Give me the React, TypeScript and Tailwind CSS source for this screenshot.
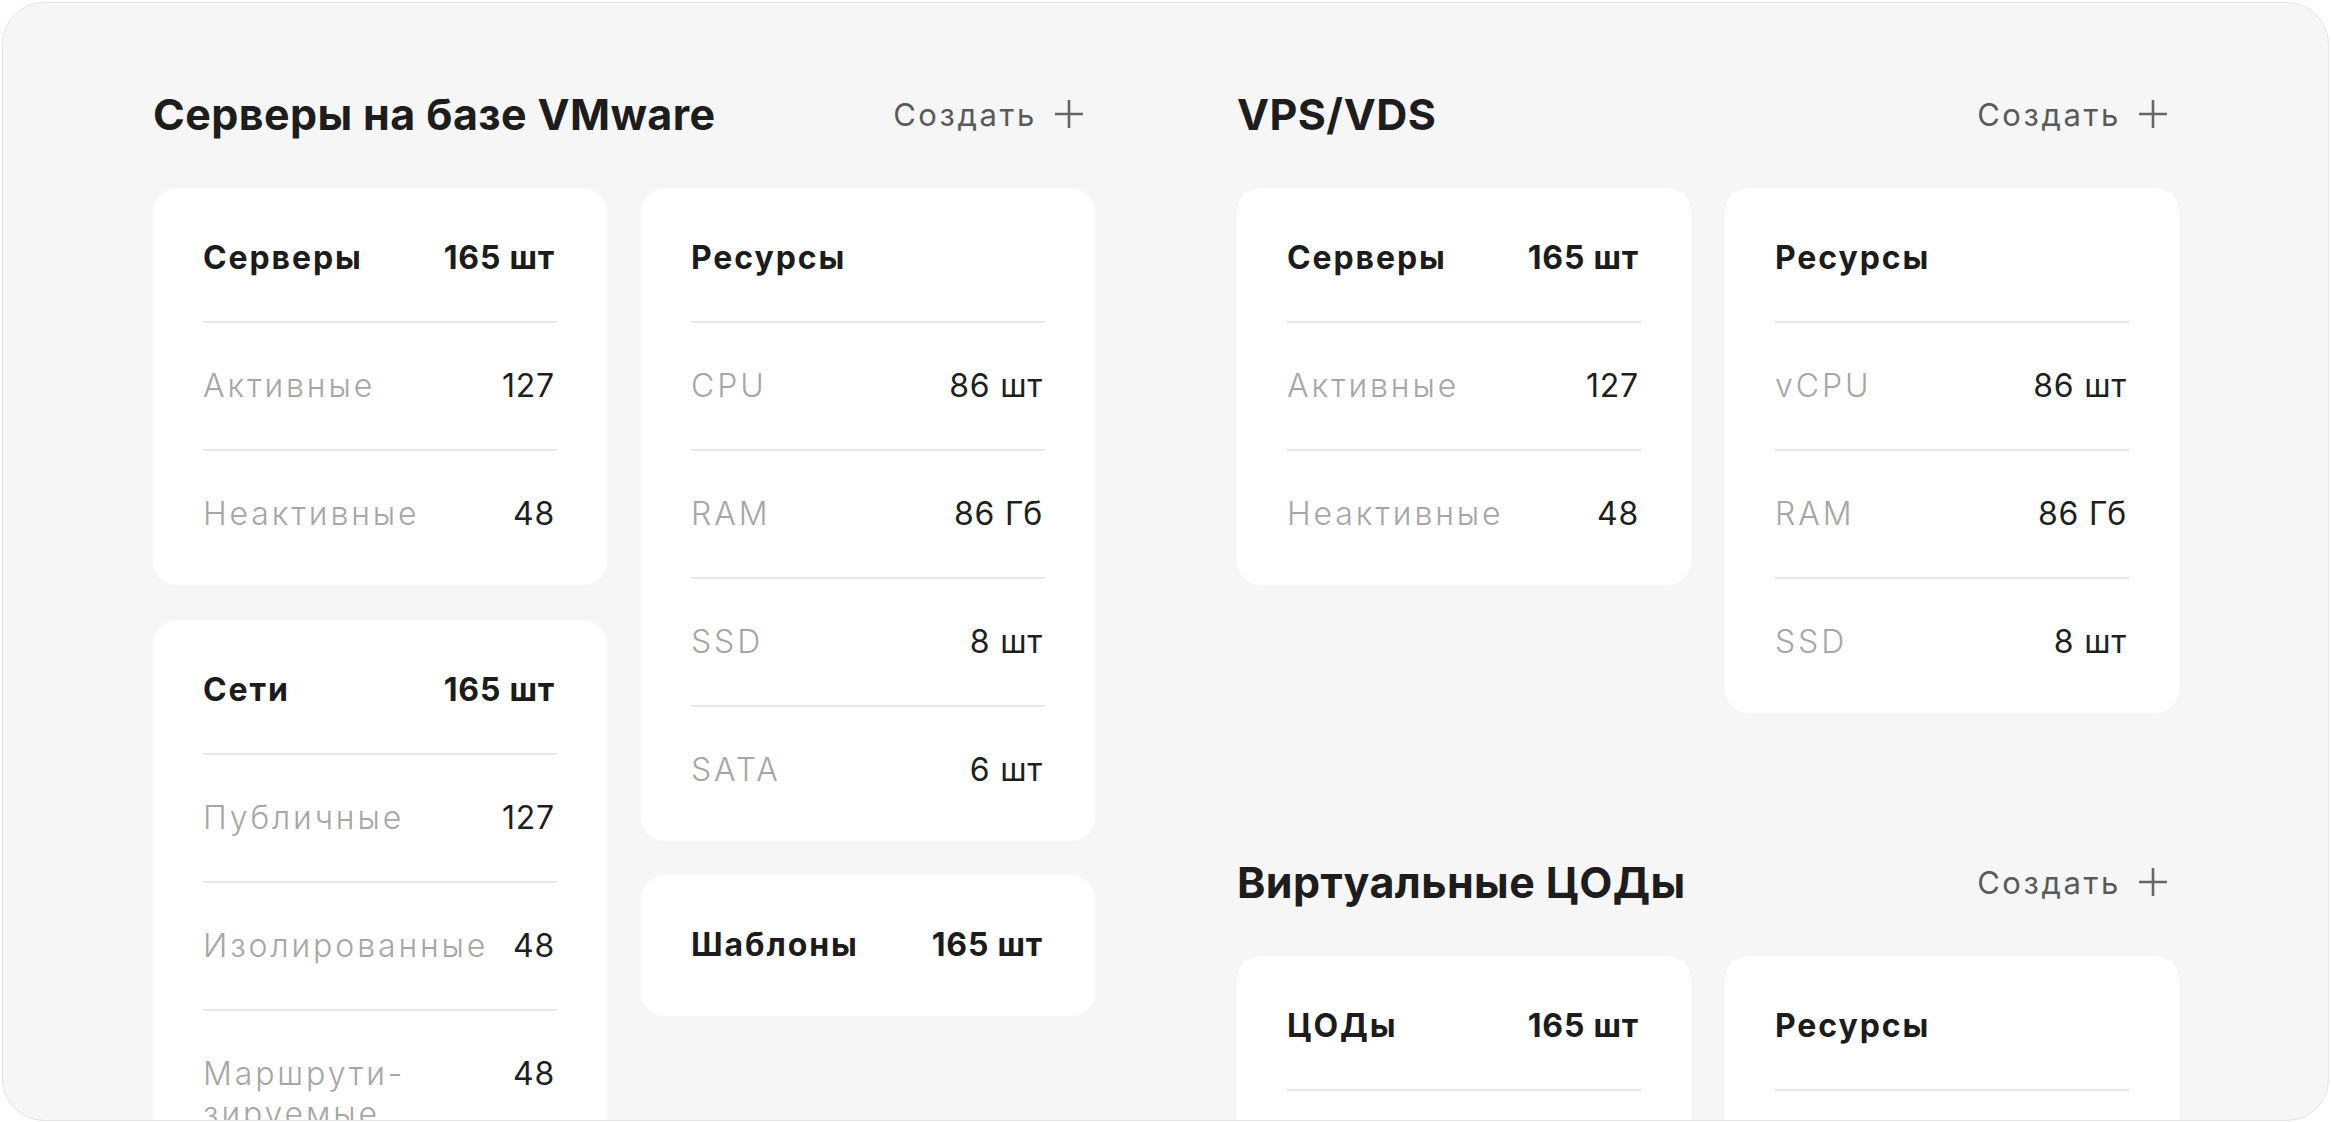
import React from "react";

type RowData = { label: React.ReactNode; value: string };
type CardData = { title: string; total?: string; rows: RowData[] };

function Plus() {
  return (
    <svg width="28" height="28" viewBox="0 0 28 28" className="shrink-0">
      <path d="M14 0V28M0 14H28" stroke="#666666" strokeWidth="2.6" fill="none" />
    </svg>
  );
}

function Row({ label, value, head }: { label: React.ReactNode; value?: string; head?: boolean }) {
  return (
    <div className="flex items-start justify-between gap-4 py-[43px] leading-[40px] text-[32px]">
      <div
        className={
          head
            ? "font-bold text-[#1c1c1c] tracking-[1.9px]"
            : "font-light text-[#a6a6a6] tracking-[2.9px]"
        }
      >
        {label}
      </div>
      {value ? (
        <div
          className={
            head
              ? "font-bold text-[#1c1c1c] whitespace-nowrap tracking-[0.8px] mr-[2px]"
              : "font-normal text-[#1f1f1f] whitespace-nowrap tracking-[0.8px] mr-[2px]"
          }
        >
          {value}
        </div>
      ) : null}
    </div>
  );
}

function Card({ data }: { data: CardData }) {
  return (
    <div className="bg-white rounded-[24px] px-[50px] pt-[7px] pb-[8px]">
      <Row label={data.title} value={data.total} head />
      {data.rows.map((r, i) => (
        <React.Fragment key={i}>
          <div className="h-[2px] bg-[#e6e6e6]" />
          <Row label={r.label} value={r.value} />
        </React.Fragment>
      ))}
    </div>
  );
}

function SectionHeader({ title }: { title: string }) {
  return (
    <div className="flex items-center justify-between h-[48px] mb-[50px] pr-[12px]">
      <h2 className="text-[43px] font-bold text-[#1d1d1d] leading-none tracking-[0.4px]">{title}</h2>
      <button className="flex items-center gap-[18px] text-[31px] text-[#5a5a5a] leading-none tracking-[2.6px]">
        <span>Создать</span>
        <Plus />
      </button>
    </div>
  );
}

const serversVm: CardData = {
  title: "Серверы",
  total: "165 шт",
  rows: [
    { label: "Активные", value: "127" },
    { label: "Неактивные", value: "48" },
  ],
};

const networks: CardData = {
  title: "Сети",
  total: "165 шт",
  rows: [
    { label: "Публичные", value: "127" },
    { label: "Изолированные", value: "48" },
    {
      label: (
        <>
          Маршрути-
          <br />
          зируемые
        </>
      ),
      value: "48",
    },
  ],
};

const resourcesVm: CardData = {
  title: "Ресурсы",
  rows: [
    { label: "CPU", value: "86 шт" },
    { label: "RAM", value: "86 Гб" },
    { label: "SSD", value: "8 шт" },
    { label: "SATA", value: "6 шт" },
  ],
};

const templates: CardData = { title: "Шаблоны", total: "165 шт", rows: [] };

const vpsServers: CardData = {
  title: "Серверы",
  total: "165 шт",
  rows: [
    { label: "Активные", value: "127" },
    { label: "Неактивные", value: "48" },
  ],
};

const vpsResources: CardData = {
  title: "Ресурсы",
  rows: [
    { label: "vCPU", value: "86 шт" },
    { label: "RAM", value: "86 Гб" },
    { label: "SSD", value: "8 шт" },
  ],
};

const vdcCard: CardData = {
  title: "ЦОДы",
  total: "165 шт",
  rows: [
    { label: "Активные", value: "127" },
    { label: "Неактивные", value: "48" },
  ],
};

const vdcResources: CardData = {
  title: "Ресурсы",
  rows: [
    { label: "vCPU", value: "86 шт" },
    { label: "RAM", value: "86 Гб" },
    { label: "SSD", value: "8 шт" },
  ],
};

export default function App() {
  return (
    <div className="w-[2331px] h-[1122px] bg-white font-['Inter','Noto_Sans',sans-serif] overflow-hidden">
      <div className="mx-[2px] mt-[2px] h-[1119px] box-border border border-[#e4e4e4] rounded-[42px] bg-[#f6f6f6] overflow-hidden pt-[87px] pl-[150px]">
        <div className="flex gap-[142px] items-start">
          {/* Left section */}
          <div className="w-[942px]">
            <SectionHeader title="Серверы на базе VMware" />
            <div className="grid grid-cols-2 gap-[34px] items-start">
              <div className="flex flex-col gap-[35px]">
                <Card data={serversVm} />
                <Card data={networks} />
              </div>
              <div className="flex flex-col gap-[34px]">
                <Card data={resourcesVm} />
                <Card data={templates} />
              </div>
            </div>
          </div>

          {/* Right section */}
          <div className="w-[942px] flex flex-col gap-[145px]">
            <div>
              <SectionHeader title="VPS/VDS" />
              <div className="grid grid-cols-2 gap-[34px] items-start">
                <Card data={vpsServers} />
                <Card data={vpsResources} />
              </div>
            </div>
            <div>
              <SectionHeader title="Виртуальные ЦОДы" />
              <div className="grid grid-cols-2 gap-[34px] items-start">
                <Card data={vdcCard} />
                <Card data={vdcResources} />
              </div>
            </div>
          </div>
        </div>
      </div>
    </div>
  );
}
